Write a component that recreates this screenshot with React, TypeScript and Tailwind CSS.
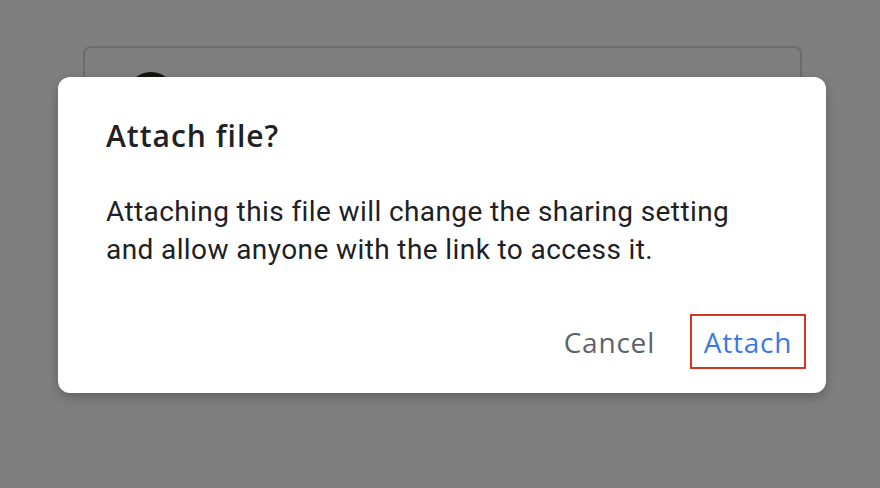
import React from 'react';

export default function App() {
  return (
    <div className="relative w-[880px] h-[488px] overflow-hidden bg-[#7f7f7f] font-['Roboto',sans-serif]">
      {/* page behind the scrim */}
      <div className="ml-[83px] mt-[46px] w-[719px] h-[200px] rounded-lg border-2 border-[#6c6c6c] pl-[42px] pt-[24px]">
        <div className="h-[48px] w-[48px] rounded-full bg-[#121510]" />
      </div>

      {/* dialog */}
      <div className="absolute left-[58px] top-[77px] w-[768px] h-[316px] rounded-xl bg-white shadow-[0_4px_12px_rgba(0,0,0,0.25)] flex flex-col">
        <h2 className="pl-[48px] pt-[40px] text-[30px] leading-[38px] font-semibold text-[#202124] font-['Open_Sans',sans-serif] tracking-[1px]">
          Attach file?
        </h2>
        <p className="pl-[48px] pt-[38px] text-[28px] leading-[38px] text-[#202124] tracking-[0.4px]">
          Attaching this file will change the sharing setting
          <br />
          and allow anyone with the link to access it.
        </p>
        <div className="mt-auto mb-[24px] mr-[20px] flex items-center justify-end gap-[35px]">
          <button className="text-[28px] font-medium text-[#5f6368] font-['Open_Sans',sans-serif] tracking-[0.8px]">Cancel</button>
          <button className="h-[55px] w-[116px] border-2 border-[#d4391f] text-[28px] font-medium text-[#3b78e7] font-['Open_Sans',sans-serif] tracking-[0.8px]">
            Attach
          </button>
        </div>
      </div>
    </div>
  );
}
